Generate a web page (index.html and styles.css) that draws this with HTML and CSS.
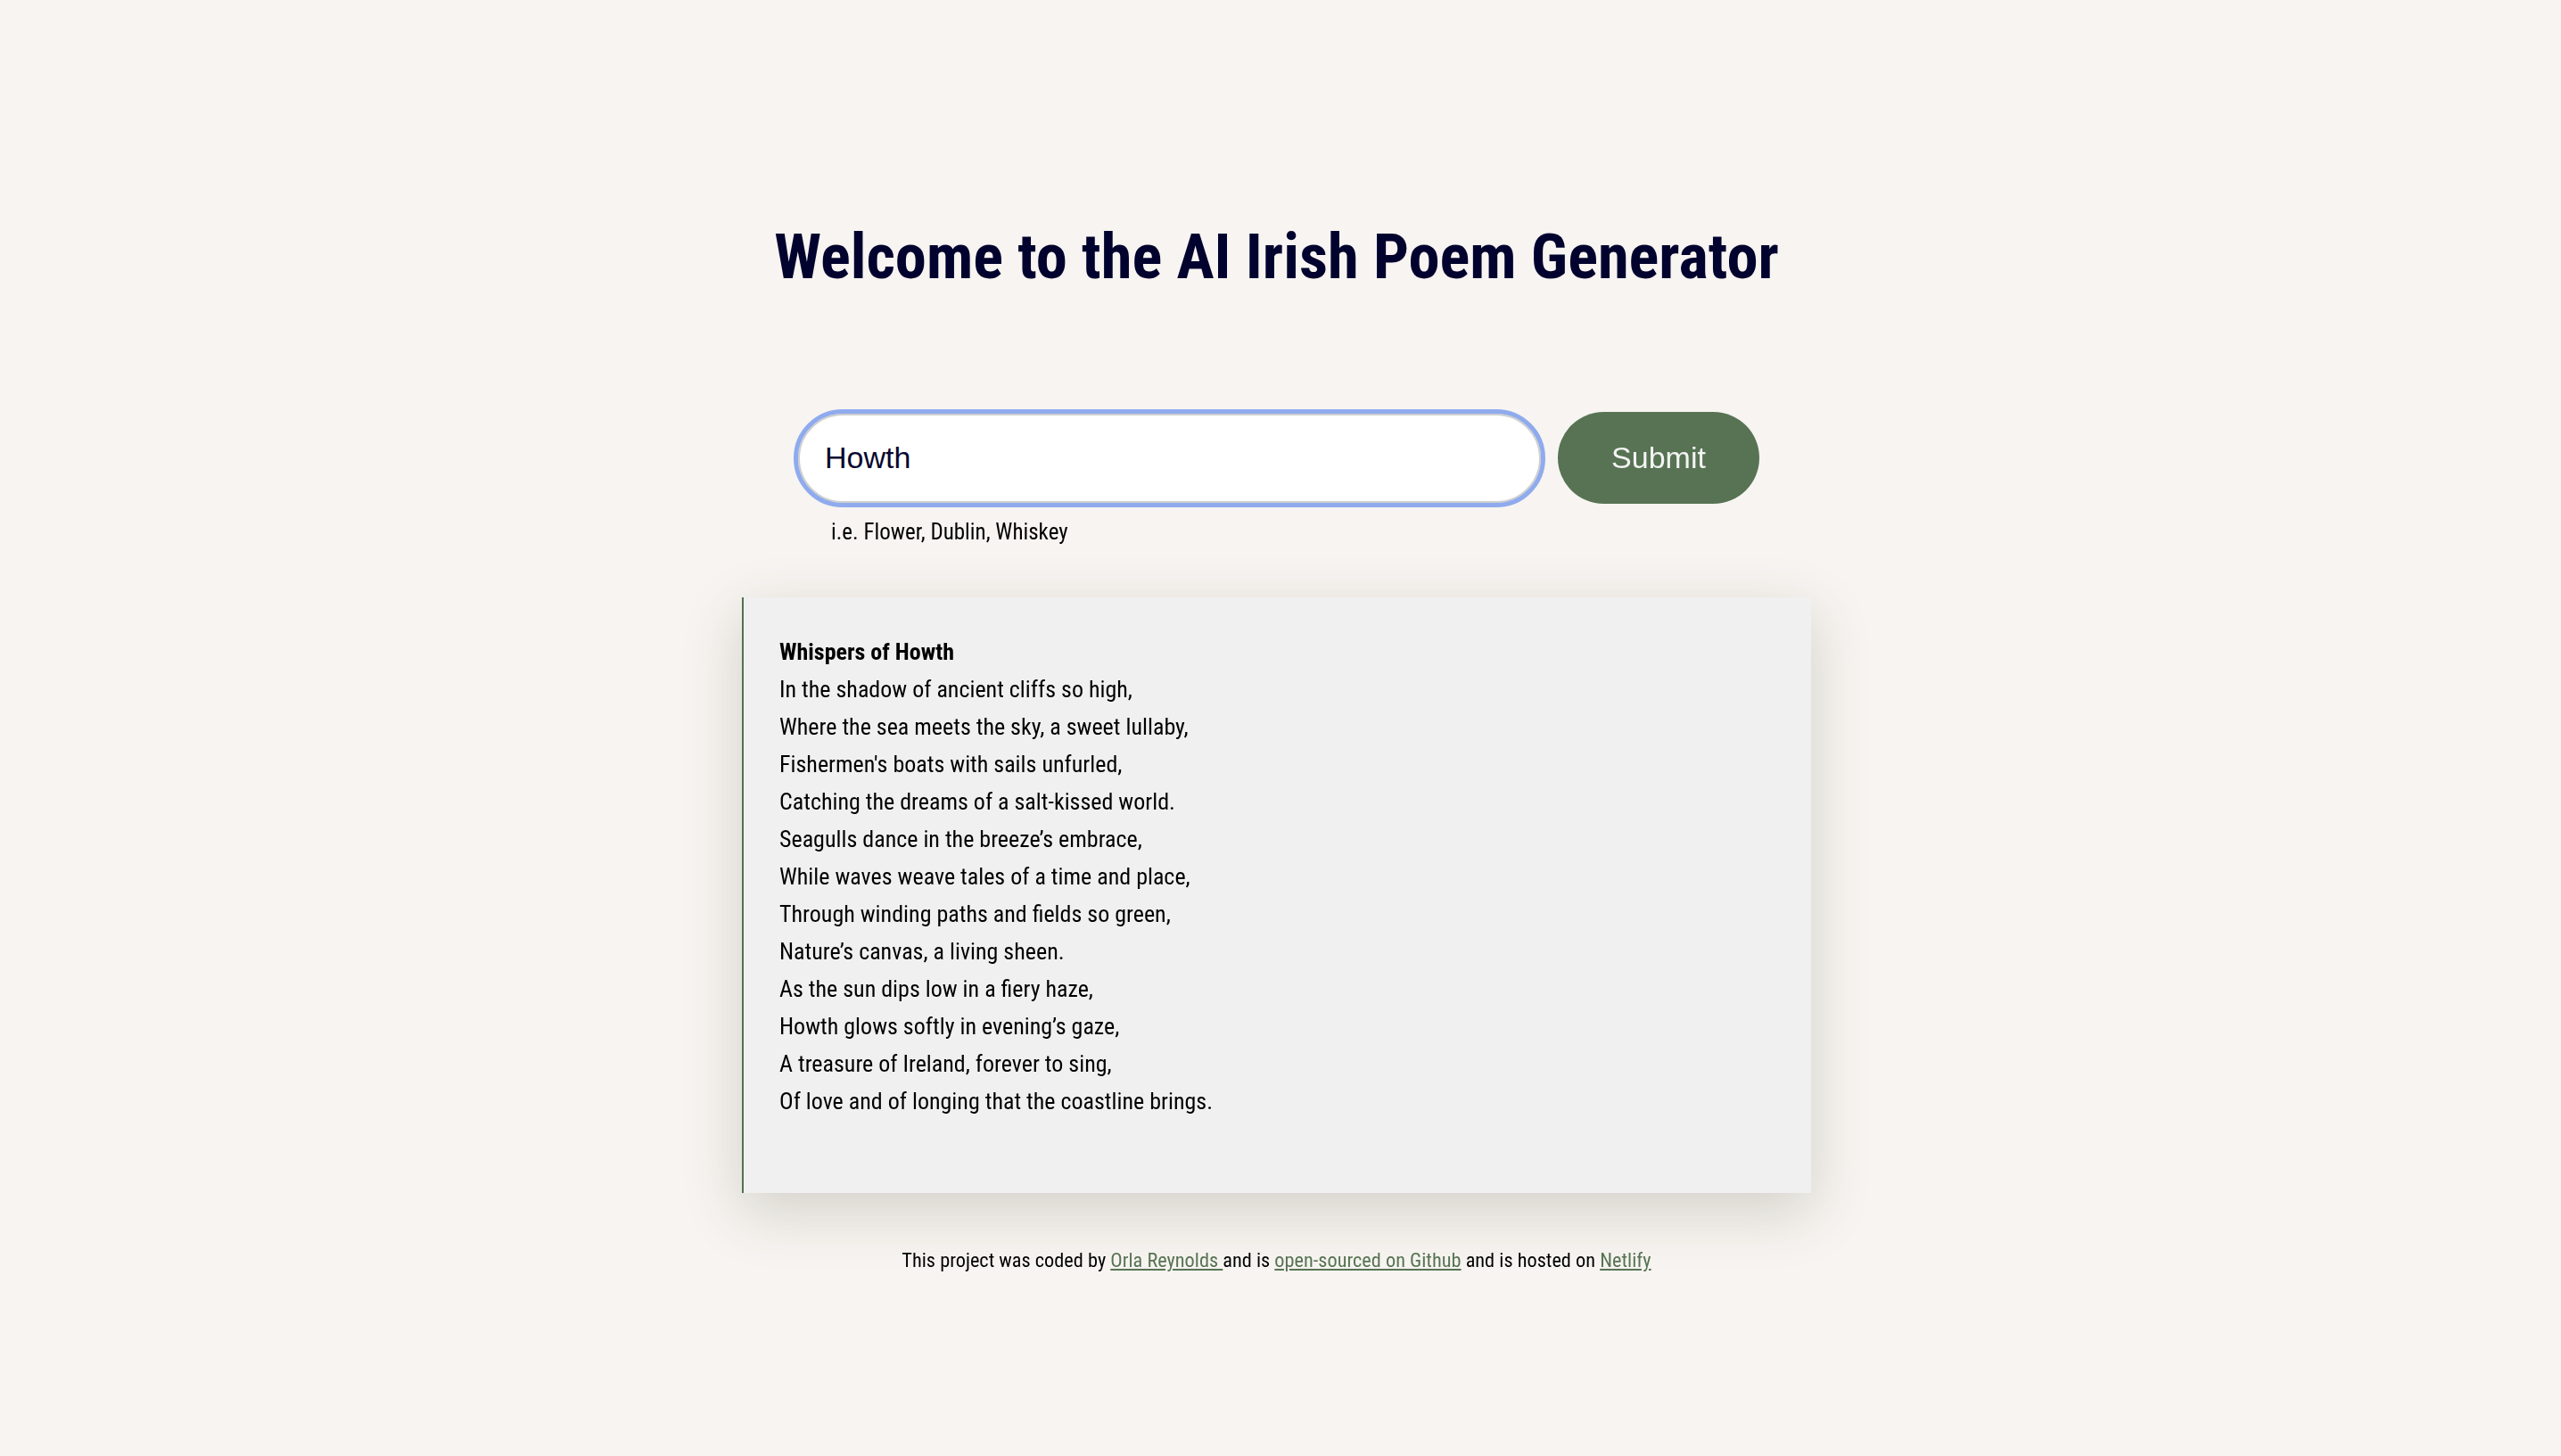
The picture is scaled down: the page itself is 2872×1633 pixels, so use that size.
FILE: index.html
```html
<!DOCTYPE html>
<html lang="en">
<head>
<meta charset="utf-8">
<title>AI Irish Poem Generator</title>
<link rel="stylesheet" href="styles.css">
</head>
<body>
<div class="page">
  <header class="header">
    <h1 class="title">Welcome to the AI Irish Poem Generator</h1>
  </header>
  <form class="search">
    <div class="row">
      <input class="field" type="text" value="Howth" autofocus>
      <button class="submit" type="button">Submit</button>
    </div>
    <div class="hint">i.e. Flower, Dublin, Whiskey</div>
  </form>
  <section class="poem">
    <strong>Whispers of Howth</strong><br>
    In the shadow of ancient cliffs so high,<br>
    Where the sea meets the sky, a sweet lullaby,<br>
    Fishermen's boats with sails unfurled,<br>
    Catching the dreams of a salt-kissed world.<br>
    Seagulls dance in the breeze’s embrace,<br>
    While waves weave tales of a time and place,<br>
    Through winding paths and fields so green,<br>
    Nature’s canvas, a living sheen.<br>
    As the sun dips low in a fiery haze,<br>
    Howth glows softly in evening’s gaze,<br>
    A treasure of Ireland, forever to sing,<br>
    Of love and of longing that the coastline brings.
  </section>
  <footer class="footer">
    This project was coded by <a href="#">Orla Reynolds </a>and is <a href="#">open-sourced on Github</a> and is hosted on <a href="#">Netlify</a>
  </footer>
</div>
</body>
</html>
```
FILE: styles.css
```css
html, body {
  margin: 0;
  padding: 0;
  background: #f7f4f1;
}
body {
  font-family: "Roboto Condensed", "Liberation Sans", Arial, sans-serif;
  color: #000;
}
.page {
  display: flex;
  flex-direction: column;
  align-items: center;
  padding-top: 240px;
  padding-right: 9px;
}
.title {
  margin: 0;
  font-size: 70.5px;
  line-height: 96px;
  font-weight: 700;
  color: #02022e;
}
.search {
  margin-top: 126px;
  display: flex;
  flex-direction: column;
  width: 1083px;
}
.row {
  display: flex;
  align-items: center;
  gap: 19px;
  padding-left: 5px;
}
.field {
  box-sizing: border-box;
  width: 833px;
  height: 100px;
  border: 2px solid #cfcfcf;
  outline: 5px solid #8fabee;
  outline-offset: 0;
  border-radius: 50px;
  background: #fff;
  padding: 0 28px;
  font-family: "Liberation Sans", Arial, sans-serif;
  font-size: 34px;
  color: #08082e;
  caret-color: #08082e;
}
.submit {
  width: 226px;
  height: 103px;
  border: none;
  border-radius: 52px;
  background: #577353;
  color: #f4f4f4;
  font-family: "Liberation Sans", Arial, sans-serif;
  font-size: 34px;
}
.hint {
  margin-top: 17px;
  margin-left: 42px;
  font-size: 25px;
  line-height: 30px;
}
.poem {
  box-sizing: border-box;
  margin-top: 58px;
  width: 1199px;
  background: #f0f0f0;
  border-left: 2px solid #557050;
  padding: 40px 40px 82px 40px;
  font-size: 26px;
  line-height: 42px;
  box-shadow: 0 20px 60px rgba(80, 85, 60, 0.22);
}
.poem strong {
  font-weight: 700;
}
.footer {
  margin-top: 60px;
  font-size: 22.3px;
  line-height: 30px;
}
.footer a {
  color: #577353;
}
```
